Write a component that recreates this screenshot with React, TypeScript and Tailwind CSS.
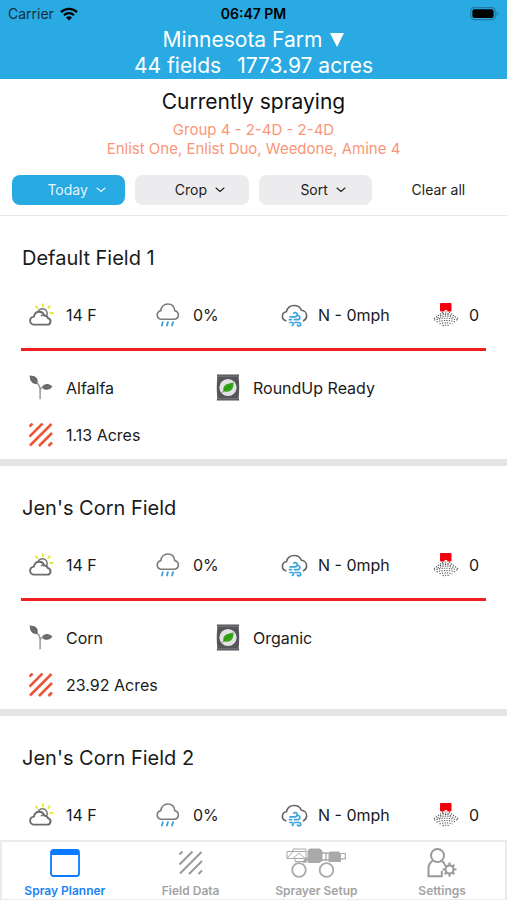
import React from "react";

type Field = {
  name: string;
  crop?: string;
  trait?: string;
  acres?: string;
};

const fields: Field[] = [
  {
    name: "Default Field 1",
    crop: "Alfalfa",
    trait: "RoundUp Ready",
    acres: "1.13 Acres",
  },
  {
    name: "Jen's Corn Field",
    crop: "Corn",
    trait: "Organic",
    acres: "23.92 Acres",
  },
  { name: "Jen's Corn Field 2" },
];

const WifiIcon = () => (
  <svg width="18" height="14" viewBox="0 0 18 14" fill="none" stroke="#000">
    <path d="M1 5.2a11.4 11.4 0 0 1 16 0" strokeWidth="2.4" />
    <path d="M4 8.2a7.1 7.1 0 0 1 10 0" strokeWidth="2.3" />
    <path d="M9 13.6 6 10.6a4.3 4.3 0 0 1 6 0z" fill="#000" stroke="none" />
  </svg>
);

const BatteryIcon = () => (
  <svg width="30" height="14" viewBox="0 0 30 14">
    <rect x="1.7" y="0.7" width="24.6" height="12" rx="3.6" fill="none" stroke="#1f7ba6" strokeWidth="1.2" />
    <rect x="3.4" y="2.3" width="21.2" height="8.8" rx="2" fill="#000" />
    <path d="M27.5 4.700v4c1-.3 1.7-1 1.7-2s-.7-1.7-1.7-2z" fill="#1f7ba6" />
  </svg>
);

const SunCloudIcon = () => (
  <svg width="25" height="24" viewBox="0 0 25 24" fill="none" strokeLinecap="round">
    <path d="M13.8 1.2v2.4M7 3.4l1.4 1.8M20.8 3.2l-1.5 1.9M23.6 10h-2.4" stroke="#e6e83c" strokeWidth="1.9" />
    <path d="M9.6 7.6c2.2-2.6 6.4-2.4 8 .6.9 1.7.7 3.6-.3 5.2" stroke="#777" strokeWidth="1.5" />
    <path
      d="M5.3 21.6a4 4 0 0 1-.4-8c.6-3 2.6-4.9 5.3-4.9 2.3 0 4.3 1.5 5 3.8 2 .1 3.3 1.1 3.8 2.6a3.3 3.3 0 0 1-1 6.5z"
      stroke="#6b6b6b"
      strokeWidth="1.9"
    />
    <path d="M12.4 12.8c.7-.7 1.5-1 2.6-.9" stroke="#6b6b6b" strokeWidth="1.3" />
  </svg>
);

const RainIcon = () => (
  <svg width="24" height="24" viewBox="0 0 24 24" fill="none" strokeLinecap="round">
    <path
      d="M5 16.2a4.3 4.3 0 0 1-.2-8.5c.5-4 3.3-6.7 7-6.7s6.5 2.5 7 6.7a4.3 4.3 0 0 1-.2 8.5z"
      stroke="#7b7b7b"
      strokeWidth="1.6"
    />
    <path d="M6.8 19.2l-1 3.3M11.9 19.2l-1 3.3M17 19.2l-1 3.3" stroke="#3a9fd8" strokeWidth="1.8" />
  </svg>
);

const WindIcon = () => (
  <svg width="27" height="23" viewBox="0 0 27 23" fill="none" strokeLinecap="round">
    <path
      d="M4.8 16.8a4.6 4.6 0 0 1 .6-9c.8-3.7 3.9-6.3 7.7-6.3 3.3 0 6.2 1.9 7.3 4.8 3 .2 5.2 2.5 5.2 5.4 0 2.3-1.2 4.2-3.1 5"
      stroke="#666"
      strokeWidth="1.6"
    />
    <path
      d="M9 12.8h5.2a2.1 2.1 0 1 0-1.4-3.7M13.5 15.6h3.2a2.1 2.1 0 1 0-1.3-3.7M8.5 15.6h2M9 18.5h2.2a1.5 1.5 0 0 1 .2 2.9M13.8 18.5h4.2a1.7 1.7 0 1 1-1.5 2.5"
      stroke="#3ba3e0"
      strokeWidth="1.7"
    />
  </svg>
);

const SprayIcon = () => (
  <svg width="28" height="24" viewBox="0 0 28 24" fill="none">
    <rect x="8" y="0" width="11.5" height="8.5" rx="1" fill="#f0000c" />
    <path d="M12.2 8.5a1.7 1.4 0 0 1 3.4 0z" fill="#fff" />
    <g stroke="#5c5c5c" strokeWidth="1.1" strokeDasharray="1.3 1.2">
      <path d="M11 9 1 16.5M17 9l10 7.500" />
      <path d="M10.5 10.8q3.500-1.500 7 0" />
      <path d="M8 12.8q6-2.500 12 0" />
      <path d="M5.500 14.9q8.500-3.500 17 0" />
      <path d="M2 17.2q12-4 24 0" />
      <path d="M4.500 19q9.500-3 19 0" />
      <path d="M7.500 20.9q6.500-2 13 0" />
      <path d="M10.500 22.7q3.500-1 7 0" />
    </g>
  </svg>
);

const SproutIcon = () => (
  <svg width="24" height="25" viewBox="0 0 24 25">
    <path d="M.6.6c2.800.2 5.400.6 7 2.500 1.200 1.500 1.400 3.600 1 6-2.400.2-4.600-.4-6-2C1 5.300.9 3 .6.600z" fill="#666" />
    <path d="M12.800 12.200c2.700-4.200 7.400-4.200 10.600-.6-2.900 3.900-7.700 4.400-10.600.6z" fill="#666" />
    <path d="M8 8c2.300 2 3.100 4 3.100 6.500v9.800M11.100 15.500c.2-2 .9-2.900 2.600-3.400" stroke="#9a9a9a" strokeWidth="1.5" fill="none" />
    <path d="M2 1.800l6.500 6.500M15 12l7-.2" stroke="#8c8c8c" strokeWidth=".6" />
  </svg>
);

const SeedBagIcon = () => (
  <svg width="24" height="27" viewBox="0 0 24 27">
    <path d="M.8.5h22.400l-.5 3c.7 6.500.7 13.500 0 20l.6 3H.7l.6-3c-.7-6.500-.7-13.500 0-20z" fill="#55565a" />
    <path d="M1.500 2.200h21M1.500 24.800h21" stroke="#84858a" strokeWidth=".8" />
    <circle cx="12" cy="13.5" r="8.6" fill="#e3e3e3" />
    <path d="M7.500 17.200c-1.200-5.400 2.300-7.300 9.900-8.600.6 6.800-3.200 10.700-9.900 8.600z" fill="#35a61b" />
    <path d="M6.200 18.700c2.500-3.300 5.300-5.500 8.500-7" stroke="#1f7c0d" strokeWidth=".8" fill="none" />
  </svg>
);

const StripesIcon = ({ color, width }: { color: string; width: number }) => (
  <svg width="24" height="24" viewBox="0 0 24 24">
    <path
      d="M.5 3.500 3.500.5M.5 13.500 13.500.5M1 22.500 22.500 1M10 23 23 10M19.500 23l3.500-3.500"
      stroke={color}
      strokeWidth={width}
      fill="none"
    />
  </svg>
);

const ChevronIcon = () => (
  <svg width="10" height="6" viewBox="0 0 10 6" fill="none" stroke="currentColor" strokeWidth="1.1" strokeLinecap="round">
    <path d="M1 1l4 3.500L9 1" />
  </svg>
);

const PlannerIcon = () => (
  <svg width="30" height="28" viewBox="0 0 30 28">
    <rect x="1" y="1" width="28" height="26" rx="2.5" fill="none" stroke="#0a7aff" strokeWidth="1.8" />
    <path d="M1 6V3.500A2.500 2.500 0 0 1 3.500 1h23A2.500 2.500 0 0 1 29 3.500V6z" fill="#0a7aff" />
  </svg>
);

const SprayerIcon = () => (
  <svg width="60" height="30" viewBox="0 0 60 30" fill="none" stroke="#a9a9a9">
    <path d="M1 3.500h6V1h13v9.500H1zM1 10.500 7 3.500M7 10.500l6-5.500 6 5.500M7 3.500h13M9 10.500v3h11" strokeWidth="1" />
    <path d="M22 2.500 24 1h10l2 2v10l-3 1.500H22z" fill="#a9a9a9" strokeWidth="1" />
    <path d="M19 10h3l-2 4.500h-3z" fill="#a9a9a9" strokeWidth=".8" />
    <path d="M36 5h7M36 12h7M40 5v7" strokeWidth="1.3" />
    <path d="M44 4h9l1.500 2v7.500H43V6z" fill="#a9a9a9" strokeWidth="1" />
    <path d="M55 5.500h4.300v5.300H55" strokeWidth="1.2" />
    <circle cx="13" cy="22" r="6.8" strokeWidth="1.8" />
    <circle cx="40.5" cy="22" r="6.8" strokeWidth="1.8" />
  </svg>
);

const SettingsIcon = () => (
  <svg width="30" height="30" viewBox="0 0 30 30" fill="none" stroke="#999">
    <circle cx="10.5" cy="7.5" r="6.5" strokeWidth="2" />
    <path d="M6 12.500c-3 2-4.500 4.500-4.500 8v7.800h13.300V23M15 13c1.300 1 2.200 2.200 2.700 3.600" strokeWidth="2" />
    <circle cx="22.5" cy="21.5" r="4" strokeWidth="2" />
    <path
      d="M22.500 17.500v-3M22.500 25.500v3M18.500 21.500h-3M26.500 21.500h3M19.700 18.700l-2-2M25.300 24.300l2 2M25.300 18.700l2-2M19.700 24.300l-2 2"
      strokeWidth="2.2"
    />
  </svg>
);

const FilterButton = ({ label, active }: { label: string; active?: boolean }) => (
  <button
    className={
      active
        ? "flex h-[30px] items-center justify-center gap-2 rounded-lg bg-[#27a9e1] pl-4 text-[#e4f5fd]"
        : "flex h-[30px] items-center justify-center gap-2 rounded-lg bg-[#ececee] pl-4 text-[#1c1c1c]"
    }
  >
    {label}
    <ChevronIcon />
  </button>
);

const Reading = ({ icon, children }: { icon: React.ReactNode; children: React.ReactNode }) => (
  <div className="flex items-center">
    <span className="flex w-[37px] shrink-0 items-center">{icon}</span>
    <span className="whitespace-nowrap">{children}</span>
  </div>
);

const FieldCard = ({ field }: { field: Field }) => (
  <article className="shrink-0 border-b-[7px] border-[#e5e5e5] px-[21px] pt-7 text-base leading-6 text-[#1a1a1a]">
    <h2 className="px-px text-xl leading-7">{field.name}</h2>
    <div className="mt-[31px] grid grid-cols-[127fr_125fr_151fr_54fr] pl-2">
      <Reading icon={<SunCloudIcon />}>14 F</Reading>
      <Reading icon={<RainIcon />}>0%</Reading>
      <Reading icon={<WindIcon />}>N - 0mph</Reading>
      <Reading icon={<SprayIcon />}>0</Reading>
    </div>
    <hr className="mt-[21px] border-t-3 border-[#f0201f]" />
    {field.crop && (
      <div className="mt-[23px] grid grid-cols-[187fr_270fr] gap-y-[22px] pb-3 pl-2">
        <Reading icon={<SproutIcon />}>{field.crop}</Reading>
        <Reading icon={<SeedBagIcon />}>{field.trait}</Reading>
        <Reading icon={<StripesIcon color="#ee5537" width={2.6} />}>{field.acres}</Reading>
      </div>
    )}
  </article>
);

const Tab = ({ icon, label, active }: { icon: React.ReactNode; label: string; active?: boolean }) => (
  <a
    href="#"
    className={
      active
        ? "flex flex-col items-center text-[#1a82f7]"
        : "flex flex-col items-center text-[#a3a3a3]"
    }
  >
    <span className="flex h-[30px] items-center">{icon}</span>
    <span className="mt-[5px] text-xs leading-4 font-semibold">{label}</span>
  </a>
);

const App: React.FunctionComponent<{}> = () => {
  return (
    <div className="flex h-screen flex-col bg-white font-['Inter',sans-serif]">
      <header className="bg-[#2aaae2]">
        <div className="grid h-[27px] grid-cols-3 items-center px-2 text-sm text-black">
          <span className="flex items-center gap-1.5 text-[#12303d]">
            Carrier <WifiIcon />
          </span>
          <span className="text-center font-semibold">06:47 PM</span>
          <span className="flex justify-end">
            <BatteryIcon />
          </span>
        </div>
        <div className="flex flex-col items-center text-[21px] leading-[26px] text-white">
          <button className="flex items-center gap-2">
            Minnesota Farm
            <svg width="14" height="14" viewBox="0 0 14 14">
              <path d="M0 0h14L7 14z" fill="#fff" />
            </svg>
          </button>
          <p className="flex gap-4">
            <span>44 fields</span>
            <span>1773.97 acres</span>
          </p>
        </div>
      </header>

      <section className="border-b border-[#e8e8e8] pt-[9px] pb-2.5">
        <div className="text-center">
          <h1 className="text-[21px] leading-7 text-[#111]">Currently spraying</h1>
          <p className="mt-1 text-[15px] leading-[19px] text-[#fa9678]">
            Group 4 - 2-4D - 2-4D
            <br />
            Enlist One, Enlist Duo, Weedone, Amine 4
          </p>
        </div>
        <div className="mt-[17px] grid grid-cols-4 gap-2.5 px-3 text-sm">
          <FilterButton label="Today" active />
          <FilterButton label="Crop" />
          <FilterButton label="Sort" />
          <button className="h-[30px] text-[#1c1c1c]">Clear all</button>
        </div>
      </section>

      <main className="flex min-h-0 flex-1 flex-col overflow-hidden">
        {fields.map((field) => (
          <FieldCard key={field.name} field={field} />
        ))}
      </main>

      <nav className="grid grid-cols-4 border-2 border-b-1 border-[#ebebeb] bg-white pt-1.5">
        <Tab icon={<PlannerIcon />} label="Spray Planner" active />
        <Tab icon={<StripesIcon color="#999" width={2} />} label="Field Data" />
        <Tab icon={<SprayerIcon />} label="Sprayer Setup" />
        <Tab icon={<SettingsIcon />} label="Settings" />
      </nav>
    </div>
  );
};

export default App;
